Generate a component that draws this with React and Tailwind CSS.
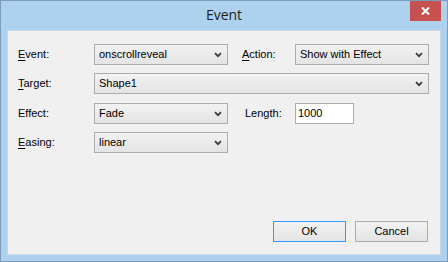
import React from "react";

const font = { fontFamily: '"Liberation Sans", Arial, sans-serif' };

function Chevron() {
  return (
    <svg width="8" height="6" viewBox="0 0 8 6" className="shrink-0">
      <path d="M1 1.2 L4 4.2 L7 1.2" fill="none" stroke="#3c3c3c" strokeWidth="1.8" />
    </svg>
  );
}

function Select({ value, w }) {
  return (
    <div
      className={`${w} h-[21px] flex items-center justify-between pl-[4px] pr-[5px] border border-[#acacac] bg-gradient-to-b from-[#f2f2f2] to-[#e4e4e4] text-[11px] text-black`}
    >
      <span>{value}</span>
      <Chevron />
    </div>
  );
}

function Label({ u, rest, w, className = "" }) {
  return (
    <div className={`${w} ${className} text-[11px] text-black shrink-0`}>
      {u ? <span className="underline underline-offset-[2px]">{u}</span> : null}
      {rest}
    </div>
  );
}

export default function App() {
  return (
    <div style={font} className="w-[448px] h-[262px] bg-[#aed2ee] border border-[#7d9cbd] flex flex-col">
      <div className="h-[29px] relative flex items-center justify-center shrink-0">
        <span
          style={{ fontFamily: '"Open Sans", "Noto Sans", sans-serif' }}
          className="text-[14px] text-[#1e1e1e] -mt-[2px]"
        >
          Event
        </span>
        <div className="absolute right-[6px] top-0 w-[31px] h-[20px] bg-[#c75050] flex items-center justify-center">
          <svg width="9" height="8" viewBox="0 0 9 8">
            <path d="M1 0.5 L8 7.5 M8 0.5 L1 7.5" stroke="white" strokeWidth="2" />
          </svg>
        </div>
      </div>
      <div className="mx-[6px] h-[225px] bg-[#f0f0f0] border border-[#c9d9e8] flex flex-col pl-[10px] pt-[13px]">
        <div className="flex items-center">
          <Label u="E" rest="vent:" w="w-[76px]" />
          <Select value="onscrollreveal" w="w-[134px]" />
          <Label u="A" rest="ction:" w="w-[53px]" className="ml-[14px]" />
          <Select value="Show with Effect" w="w-[134px]" />
        </div>
        <div className="flex items-center mt-[8px]">
          <Label u="T" rest="arget:" w="w-[76px]" />
          <Select value="Shape1" w="w-[335px]" />
        </div>
        <div className="flex items-center mt-[9px]">
          <Label rest="Effect:" w="w-[76px]" />
          <Select value="Fade" w="w-[134px]" />
          <Label rest="Length:" w="w-[50px]" className="ml-[17px]" />
          <div className="w-[59px] h-[21px] bg-white border border-[#abadb3] flex items-center pl-[2px] text-[11px] text-black">
            1000
          </div>
        </div>
        <div className="flex items-center mt-[8px]">
          <Label u="E" rest="asing:" w="w-[76px]" />
          <Select value="linear" w="w-[134px]" />
        </div>
        <div className="flex justify-end gap-[9px] mt-[68px] pr-[12px]">
          <div className="w-[73px] h-[21px] border border-[#3399ff] bg-gradient-to-b from-[#f2f2f2] to-[#e4e4e4] flex items-center justify-center text-[11px] text-black">
            OK
          </div>
          <div className="w-[73px] h-[21px] border border-[#acacac] bg-gradient-to-b from-[#f2f2f2] to-[#e4e4e4] flex items-center justify-center text-[11px] text-black">
            Cancel
          </div>
        </div>
      </div>
    </div>
  );
}
